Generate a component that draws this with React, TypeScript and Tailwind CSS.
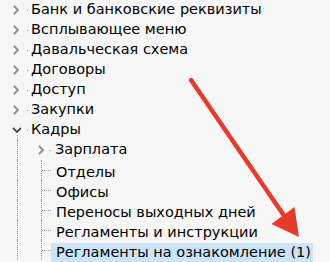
import React from 'react';

type Row = {
  label: string;
  level: 0 | 1;
  kind: 'closed' | 'open' | 'leaf';
  selected?: boolean;
};

const rows: Row[] = [
  { label: 'Банк и банковские реквизиты', level: 0, kind: 'closed' },
  { label: 'Всплывающее меню', level: 0, kind: 'closed' },
  { label: 'Давальческая схема', level: 0, kind: 'closed' },
  { label: 'Договоры', level: 0, kind: 'closed' },
  { label: 'Доступ', level: 0, kind: 'closed' },
  { label: 'Закупки', level: 0, kind: 'closed' },
  { label: 'Кадры', level: 0, kind: 'open' },
  { label: 'Зарплата', level: 1, kind: 'closed' },
  { label: 'Отделы', level: 1, kind: 'leaf' },
  { label: 'Офисы', level: 1, kind: 'leaf' },
  { label: 'Переносы выходных дней', level: 1, kind: 'leaf' },
  { label: 'Регламенты и инструкции', level: 1, kind: 'leaf' },
  { label: 'Регламенты на ознакомление (1)', level: 1, kind: 'leaf', selected: true },
];

const RightChevron = () => (
  <svg width="7" height="10" viewBox="0 0 7 10" className="shrink-0">
    <polyline points="1,1 5,5 1,9" fill="none" stroke="#8c8c8c" strokeWidth="1.8" />
  </svg>
);

const DownChevron = () => (
  <svg width="10" height="7" viewBox="0 0 10 7" className="shrink-0">
    <polyline points="1,1 5,5 9,1" fill="none" stroke="#4a4a4a" strokeWidth="1.8" />
  </svg>
);

// маленькая точка между стрелкой и текстом
const Dot = ({ className }: { className: string }) => (
  <div className={`h-px w-px shrink-0 bg-[#8a8a8a] ${className}`} />
);

const lineL = 'border-l border-dotted border-[#9a9a9a]';

const TreeRow = ({ row }: { row: Row }) => {
  const text = (
    <div
      className={`flex h-5 items-center whitespace-nowrap pr-[2px] text-[14.5px] text-black ${
        row.selected ? 'bg-[#cce4f7]' : ''
      }`}
    >
      {row.label}
    </div>
  );

  if (row.level === 0) {
    return (
      <div className="flex h-5 items-center pl-[12px]">
        {row.kind === 'open' ? (
          <div className="flex h-5 w-[10px] shrink-0 flex-col pt-[7px]">
            <DownChevron />
            <div className={`ml-[5px] mt-[1px] flex-1 ${lineL}`} />
          </div>
        ) : (
          <div className="flex w-[10px] shrink-0 justify-end pr-[2px]">
            <RightChevron />
          </div>
        )}
        <Dot className="ml-[5px] mr-[3px]" />
        {text}
      </div>
    );
  }

  return (
    <div className="flex h-5 items-stretch pl-[17px]">
      {row.kind === 'closed' ? (
        <div className={`flex flex-1 items-center ${lineL}`}>
          <div className="w-[20px] shrink-0" />
          <RightChevron />
          <Dot className="ml-[5px] mr-[4px]" />
          <div className="flex-1">{text}</div>
        </div>
      ) : (
        <div className={`flex flex-1 ${lineL}`}>
          <div className="w-[23px] shrink-0" />
          <div className={`flex w-[10px] shrink-0 flex-col ${lineL}`}>
            <div className="h-[10px]" />
            <div className="border-t border-dotted border-[#9a9a9a]" />
          </div>
          <div className={`flex-1 ${row.selected ? '' : ''}`}>
            <div className={`inline-flex pl-[5px] ${row.selected ? 'bg-[#cce4f7]' : ''}`}>{text}</div>
          </div>
        </div>
      )}
    </div>
  );
};

export default function App() {
  return (
    <div
      className="relative h-[262px] w-[330px] overflow-hidden bg-[#f7f7f7]"
      style={{ fontFamily: '"DejaVu Sans", Verdana, sans-serif' }}
    >
      <div className="flex flex-col">
        {rows.map((r) => (
          <TreeRow key={r.label} row={r} />
        ))}
      </div>
      {/* красная стрелка поверх дерева */}
      <svg className="pointer-events-none absolute inset-0" width="330" height="262">
        <line x1="191" y1="80" x2="285" y2="217" stroke="#e63c2e" strokeWidth="4.5" strokeLinecap="round" />
        <polygon points="294.5,207 271.5,224 299,237" fill="#e63c2e" />
      </svg>
    </div>
  );
}
